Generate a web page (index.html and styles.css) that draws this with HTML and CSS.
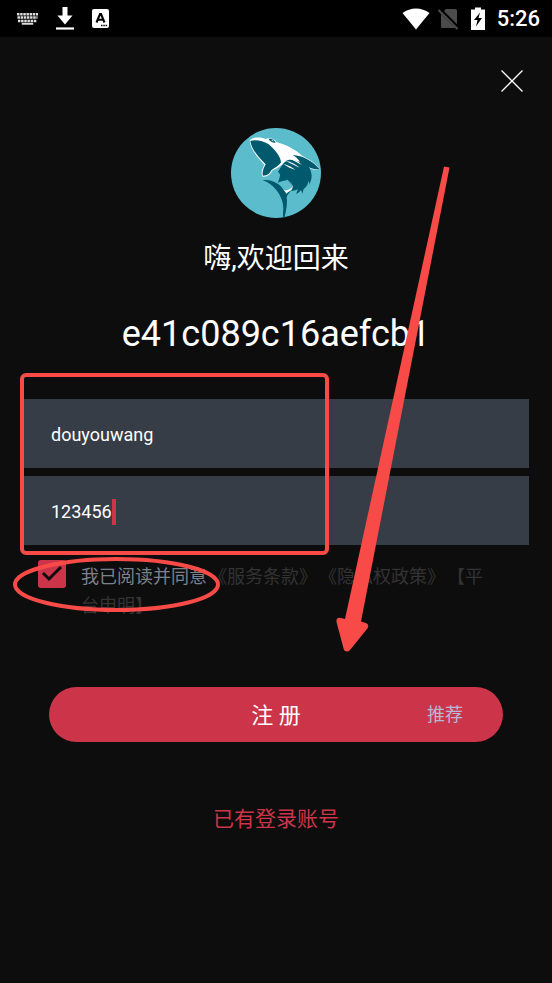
FILE: index.html
```html
<!DOCTYPE html>
<html lang="zh-CN">
<head>
  <meta charset="UTF-8">
  <meta name="viewport" content="width=device-width, initial-scale=1.0">
  <title>注册</title>
  <link rel="stylesheet" href="styles.css">
</head>
<body>
  <header class="status-bar">
    <div class="status-left">
      <svg class="icon-keyboard" width="21" height="14" viewBox="0 0 22 14">
        <path d="M0 2h22M.5 5.500h21M1 9h20" stroke="#ddd" stroke-width="2.600" stroke-dasharray="2.600 .7"/>
        <path d="M5 12h12" stroke="#ddd" stroke-width="2"/>
      </svg>
      <svg class="icon-download" width="18" height="24" viewBox="0 0 18 24">
        <path d="M6.500 0h5v8.500h5L9 17.500 1.500 8.500h5z" fill="#fff"/>
        <path d="M0 21.500h18" stroke="#fff" stroke-width="2.200"/>
      </svg>
      <svg class="icon-app" width="17" height="19" viewBox="0 0 17 19">
        <rect width="17" height="19" rx="2" fill="#fff"/>
        <path d="M4.500 13.500L8 5h1l3.500 8.500M6 10.800h5" fill="none" stroke="#000" stroke-width="2.100"/>
        <path d="M9 16.500h6.500" stroke="#000" stroke-width="1.500" stroke-dasharray="1.500 .8"/>
      </svg>
    </div>
    <div class="status-right">
      <svg width="28" height="22" viewBox="0 0 28 22">
        <path d="M.5 5C8.500-1 19.500-1 27.500 5L14 21.500z" fill="#fff"/>
      </svg>
      <svg width="21" height="22" viewBox="0 0 21 22">
        <path d="M8 1h9.500q1.500 0 1.500 1.500V20H4.500Q3 20 3 18.500V6z" fill="#4b4b4b"/>
        <path d="M1.500 1.500l19 19" stroke="#000" stroke-width="4"/>
        <path d="M.5 2l19 19" stroke="#4b4b4b" stroke-width="2"/>
      </svg>
      <svg width="14" height="23" viewBox="0 0 14 23">
        <path d="M4 .5h6V2.500h4V23H0V2.500h4z" fill="#fff"/>
        <path d="M9 5.500L3 13h3.500L5 19.500l6-8.500H7.500z" fill="#000"/>
      </svg>
      <span class="clock">5:26</span>
    </div>
  </header>

  <main class="page">
    <button class="close" type="button" aria-label="关闭">
      <svg width="22" height="22" viewBox="0 0 22 22">
        <path d="M.5 .5l21 21M21.500 .5l-21 21" stroke="#fff" stroke-width="1.300"/>
      </svg>
    </button>

    <svg class="logo" viewBox="33 31 270 270">
      <circle cx="168" cy="166" r="135" fill="#5bbccc"/>
      <path d="M89 69C93 59 119 57 136 64C155 60 166 66 169 73C200 81 231 98 247 115C262 122 286 136 300 154C285 158 277 155 269 151L240 145L193 133C184 145 170 153 158 158C151 170 144 178 128 177C122 169 125 157 133 141C118 124 92 98 89 69z" fill="#fff"/>
      <path d="M91 70C104 65 128 68 145 79C164 94 182 117 183 134C176 146 162 151 154 158C149 168 142 174 129 174C125 165 131 151 137 140C120 122 95 98 91 70z" fill="#00596d"/>
      <path d="M146 65C154 61 164 67 167 75C158 76 151 72 146 65z" fill="#00596d"/>
      <path d="M153 67l6 1 2 4z" fill="#fff"/>
      <path d="M185 75C205 81 227 92 240 106C222 95 204 84 185 75z" fill="#5bbccc"/>
      <path d="M218 112C248 114 278 130 299 154C284 156 275 153 267 149C277 165 278 185 267 201C268 196 267 193 265 190C264 202 257 210 251 214L247 228L243 217C239 223 234 226 228 229L234 215C226 219 219 220 214 220C219 205 211 194 200 184C190 180 180 171 174 162C183 146 190 138 196 132C204 122 224 126 240 133C234 123 226 117 218 112z" fill="#00596d"/>
      <path d="M202 119C217 121 233 129 246 142C230 134 216 127 202 119zM197 129C213 132 229 140 239 150C227 144 211 137 197 129zM190 139C204 142 216 149 226 157C213 153 201 147 190 139z" fill="#fff"/>
      <path d="M184 161C178 175 180 184 173 195C184 190 193 189 202 187z" fill="#00596d"/>
      <path d="M128 188C151 183 181 198 190 216C202 221 213 217 217 208C217 221 205 224 200 238C203 261 197 287 193 301C187 299 189 287 190 271C190 236 160 197 128 188z" fill="#00596d"/>
      <path d="M201 186C214 193 219 205 213 212C206 218 197 219 190 216C195 221 198 225 199 229C204 221 219 219 218 206C216 196 208 190 201 186z" fill="#fff"/>
    </svg>

    <h1 class="greeting">嗨,欢迎回来</h1>
    <p class="device-id">e41c089c16aefcb1</p>

    <form class="register">
      <label class="field">
        <input type="text" name="username" aria-label="账号" value="douyouwang">
      </label>
      <label class="field">
        <input type="text" name="password" aria-label="密码" value="123456">
        <span class="caret"></span>
      </label>

      <div class="terms">
        <input type="checkbox" id="agree" checked>
        <p class="terms-text"><label for="agree">我已阅读并同意</label><a href="#">《服务条款》</a><a href="#">《隐私权政策》</a><a href="#">【平台申明】</a></p>
      </div>

      <button class="submit" type="submit">
        <span class="submit-label">注 册</span>
        <span class="submit-tag">推荐</span>
      </button>
    </form>

    <a class="login-link" href="#">已有登录账号</a>
  </main>

  <!-- guide marks: fill in the fields, tick the box, press register -->
  <svg class="marks" viewBox="0 0 552 983">
    <rect x="22" y="375" width="305" height="178" rx="4"/>
    <ellipse cx="116.500" cy="584.500" rx="101.500" ry="25.500"/>
    <path class="arrow" d="M444 166.500L449.500 167.500L361 621.500L366 623Q370 625 367 629L350 650Q347 653 344 650L336.500 622Q336 617 341 618L345 619z"/>
  </svg>
</body>
</html>
```
FILE: styles.css
```css
* {
  box-sizing: border-box;
}
body {
  margin: 0;
  position: relative;
  min-height: 100vh;
  background-color: #0d0d0d;
  color: #fff;
  font-family: Roboto, "Noto Sans CJK SC", sans-serif;
}
a {
  text-decoration: none;
}
button {
  border: none;
  padding: 0;
  font-family: inherit;
  cursor: pointer;
}

.status-bar {
  display: flex;
  justify-content: space-between;
  align-items: center;
  height: 37px;
  padding: 0 12px 0 17px;
  background-color: #000;
}
.status-left {
  display: flex;
  align-items: center;
  gap: 18px;
}
.status-right {
  display: flex;
  align-items: center;
  gap: 12px;
}
.status-right svg:first-child {
  margin-right: -4px;
}
.clock {
  font-size: 22px;
  font-weight: 500;
  line-height: 38px;
}

.page {
  display: flex;
  flex-direction: column;
  align-items: center;
  padding: 27px 23px 40px;
}
.close {
  align-self: flex-end;
  width: 34px;
  height: 34px;
  background: none;
}
.close svg {
  display: block;
  margin: auto;
}
.logo {
  width: 90px;
  height: 90px;
  margin-top: 30px;
}
.greeting {
  margin: 21px 0 0;
  font-size: 28px;
  font-weight: 400;
  line-height: 40px;
}
.device-id {
  margin: 30px 0 40px;
  font-size: 36px;
  line-height: 50px;
}

.register {
  width: 100%;
}
.field {
  display: flex;
  align-items: center;
  height: 69px;
  margin-bottom: 8px;
  padding: 2px 28px 0;
  background-color: #373d47;
}
.field input {
  field-sizing: content;
  max-width: 100%;
  padding: 0;
  border: none;
  outline: none;
  background: none;
  color: #fff;
  font-family: inherit;
  font-size: 18px;
  line-height: 28px;
}
.caret {
  width: 4px;
  height: 26px;
  background-color: #cc3549;
}

.terms {
  display: flex;
  align-items: flex-start;
  gap: 15px;
  margin-top: 15px;
  padding: 0 36px 0 15px;
}
.terms input {
  appearance: none;
  flex: none;
  width: 28px;
  height: 28px;
  margin: 0;
  border-radius: 3px;
  background-color: #373d47;
}
.terms input:checked {
  background: #cc3549 url("data:image/svg+xml,%3Csvg xmlns='http://www.w3.org/2000/svg' viewBox='0 0 28 28'%3E%3Cpath d='M5 13l6 6L23 7' fill='none' stroke='%230d0d0d' stroke-width='3'/%3E%3C/svg%3E");
}
.terms-text {
  margin: 2px 0 0;
  color: #7c818a;
  font-size: 18px;
  line-height: 29px;
  text-spacing-trim: space-all;
}
.terms-text a {
  margin-left: 2px;
  color: #333;
}

.submit {
  display: grid;
  grid-template-columns: 1fr auto 1fr;
  align-items: center;
  width: calc(100% - 52px);
  height: 55px;
  margin: 67px 26px 0;
  padding: 0 40px 4px;
  border-radius: 28px;
  background-color: #cc3549;
  color: #fff;
}
.submit-label {
  grid-column: 2;
  font-size: 22px;
}
.submit-tag {
  justify-self: end;
  color: #b4b9d8;
  font-size: 18px;
}
.login-link {
  margin-top: 61px;
  color: #cc3549;
  font-size: 21px;
  line-height: 32px;
}

.marks {
  position: absolute;
  top: 0;
  left: 0;
  width: 100%;
  fill: none;
  stroke: #f84b48;
  stroke-width: 4;
  pointer-events: none;
}
.marks .arrow {
  fill: #f84b48;
  stroke: none;
}
```
